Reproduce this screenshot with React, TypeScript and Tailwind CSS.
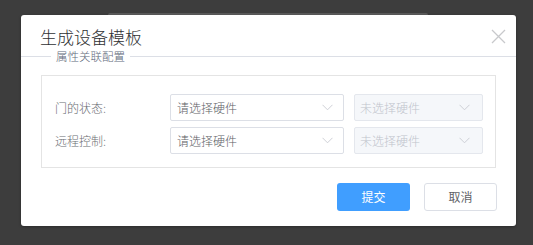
import React from 'react';

interface RowProps {
  label: string;
}

const Chevron: React.FC<{ color: string }> = ({ color }) => (
  <svg width="11" height="7" viewBox="0 0 11 7" fill="none">
    <path d="M0.5 0.8 L5.5 5.8 L10.5 0.8" stroke={color} strokeWidth="0.9" />
  </svg>
);

/**
 * One attribute row: label, hardware select and a disabled secondary select
 */
const AttrRow: React.FC<RowProps> = ({ label }) => {
  return (
    <div className="flex items-center h-[27px]">
      <div className="w-[115px] text-[12px] font-light text-[#6b6e73]">{label}</div>
      <div className="w-[174px] h-[27px] border border-[#dcdfe6] rounded-[2px] bg-white flex items-center justify-between pl-[6px] pr-[10px]">
        <span className="text-[12px] font-light text-[#606266]">请选择硬件</span>
        <Chevron color="#c8cbd1" />
      </div>
      <div className="ml-[10px] w-[129px] h-[27px] border border-[#e4e7ed] rounded-[2px] bg-[#f5f7fa] flex items-center justify-between pl-[5px] pr-[12px]">
        <span className="text-[12px] font-light text-[#c0c4cc]">未选择硬件</span>
        <Chevron color="#c8cbd1" />
      </div>
    </div>
  );
};

export default function App() {
  return (
    <div
      className="relative w-full h-[245px] bg-[#3d3d3d] pl-[21px] pt-[15px] overflow-hidden"
      style={{ fontFamily: '"Noto Sans CJK SC", "Noto Sans", sans-serif' }}
    >
      {/* edge of the page behind the overlay */}
      <div className="absolute left-[108px] top-[13px] w-[320px] h-[3px] bg-[#5a5a5a] rounded-t-[2px]" />

      <div className="relative w-[495px] h-[211px] bg-white rounded-[3px] shadow-[0_1px_3px_rgba(0,0,0,0.3)] flex flex-col">
        <div className="h-[34px] flex items-end justify-between pl-[19px] pr-[10px]">
          <span className="text-[17px] leading-[22px] font-light text-[#303133] pb-[1px]">生成设备模板</span>
          <svg width="15" height="15" viewBox="0 0 15 15" className="mb-[5px]">
            <path d="M1 1 L14 14 M14 1 L1 14" stroke="#c8c9cc" strokeWidth="1.3" />
          </svg>
        </div>

        <div className="h-[14px] flex items-center">
          <div className="w-[30px] h-px bg-[#dcdfe6]" />
          <span className="px-[5px] text-[11.5px] leading-[14px] font-light text-[#5f6b7c]">属性关联配置</span>
          <div className="flex-1 h-px bg-[#dcdfe6]" />
        </div>

        <div className="mx-[20px] mt-[12px] border border-[#e4e4e4] pl-[13px] pt-[18px] pb-[13px] flex flex-col gap-[6px]">
          <AttrRow label="门的状态:" />
          <AttrRow label="远程控制:" />
        </div>

        <div className="mt-[15px] pr-[19px] flex justify-end gap-[14px]">
          <button className="w-[73px] h-[28px] rounded-[3px] bg-[#409eff] text-white text-[12px]">提交</button>
          <button className="w-[73px] h-[28px] rounded-[3px] border border-[#dcdfe6] bg-white text-[#606266] text-[12px]">取消</button>
        </div>
      </div>
    </div>
  );
}
